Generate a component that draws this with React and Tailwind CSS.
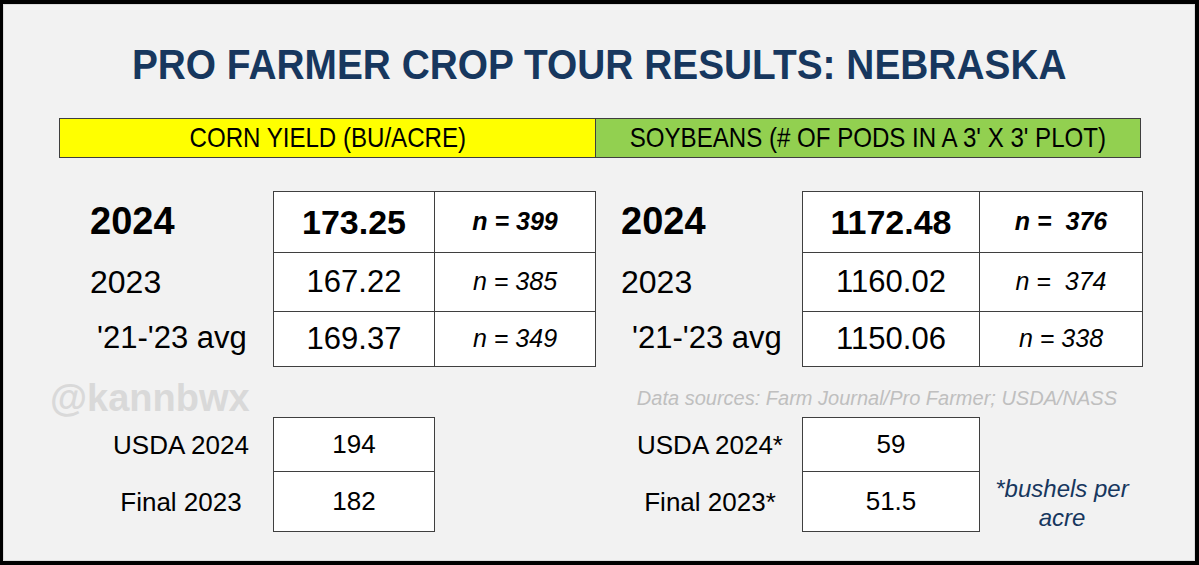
const navy = 'text-[#17375e]'

function Cell({ w, children, className = '' }) {
  return (
    <div
      className={`flex items-center justify-center border-r border-b border-[#3f3f3f] bg-white ${className}`}
      style={{ width: w }}
    >
      {children}
    </div>
  )
}

function TopTable({ widths, rows }) {
  return (
    <div className="flex flex-col border-l border-t border-[#3f3f3f]">
      {rows.map((r, i) => (
        <div key={i} className="flex" style={{ height: r.h }}>
          <Cell w={widths[0]} className={i === 0 ? 'text-[34px] font-bold' : 'text-[31px]'}>
            {r.value}
          </Cell>
          <Cell w={widths[1]} className={`whitespace-pre italic text-[25px] ${i === 0 ? 'font-bold' : ''}`}>
            {r.n}
          </Cell>
        </div>
      ))}
    </div>
  )
}

function TopLabels({ avgIndent }) {
  return (
    <div className="flex flex-col">
      <div className="flex h-[61px] items-center text-[38px] font-bold">2024</div>
      <div className="flex h-[59px] items-center text-[32px]">2023</div>
      <div className={`flex h-[55px] items-center text-[31px] ${avgIndent}`}>'21-'23 avg</div>
    </div>
  )
}

function BottomTable({ w, values }) {
  return (
    <div className="flex flex-col border-l border-t border-[#3f3f3f]">
      <div className="flex h-[54px]">
        <Cell w={w} className="text-[26px]">{values[0]}</Cell>
      </div>
      <div className="flex h-[60px]">
        <Cell w={w} className="text-[26px]">{values[1]}</Cell>
      </div>
    </div>
  )
}

function BottomLabels({ labels }) {
  return (
    <div className="flex w-[184px] flex-col text-center text-[26px]">
      <div className="flex h-[54px] items-center justify-center">{labels[0]}</div>
      <div className="flex h-[60px] items-center justify-center">{labels[1]}</div>
    </div>
  )
}

export default function App() {
  const corn = [
    { h: 61, value: '173.25', n: 'n = 399' },
    { h: 59, value: '167.22', n: 'n = 385' },
    { h: 55, value: '169.37', n: 'n = 349' },
  ]
  const soy = [
    { h: 61, value: '1172.48', n: 'n =  376' },
    { h: 59, value: '1160.02', n: 'n =  374' },
    { h: 55, value: '1150.06', n: 'n = 338' },
  ]

  return (
    <div className="h-[565px] w-[1199px] border-t-4 border-r-4 border-b-4 border-l-[3px] border-black bg-[#f2f2f2] font-['Liberation_Sans',Arial,sans-serif] text-black">
      <div className="flex h-full flex-col border border-[#dcdcdc]">
        <h1 className={`mt-[39px] flex justify-center text-[42px] leading-[42px] font-bold ${navy}`}>
          <span className="inline-block scale-x-[0.925] whitespace-nowrap">PRO FARMER CROP TOUR RESULTS: NEBRASKA</span>
        </h1>

        <div className="mt-[32px] ml-[55px] flex h-[40px] text-[28px] whitespace-nowrap">
          <div className="flex w-[537px] items-center justify-center border border-[#3f3f3f] bg-[#ffff00]">
            <span className="inline-block scale-x-[0.86]">CORN YIELD (BU/ACRE)</span>
          </div>
          <div className="flex w-[545px] items-center justify-center border border-l-0 border-[#3f3f3f] bg-[#92d050]">
            <span className="inline-block scale-x-[0.86]">SOYBEANS (# OF PODS IN A 3' X 3' PLOT)</span>
          </div>
        </div>

        <div className="mt-[33px] flex">
          <div className="ml-[86px] w-[183px]">
            <TopLabels avgIndent="pl-[7px]" />
          </div>
          <TopTable widths={[161, 161]} rows={corn} />
          <div className="ml-[25px] w-[181px]">
            <TopLabels avgIndent="pl-[11px]" />
          </div>
          <TopTable widths={[177, 163]} rows={soy} />
        </div>

        <div className="flex h-[50px] items-start">
          <div className="mt-[11px] ml-[46px] text-[38px] leading-[40px] font-bold text-[#d9d9d9]">@kannbwx</div>
          <div className="mt-[19px] mr-[77px] ml-auto text-[20px] leading-[24px] text-[#bfbfbf] italic">
            Data sources: Farm Journal/Pro Farmer; USDA/NASS
          </div>
        </div>

        <div className="flex items-end">
          <div className="ml-[85px]">
            <BottomLabels labels={['USDA 2024', 'Final 2023']} />
          </div>
          <BottomTable w={161} values={['194', '182']} />
          <div className="ml-[183px]">
            <BottomLabels labels={['USDA 2024*', 'Final 2023*']} />
          </div>
          <BottomTable w={177} values={['59', '51.5']} />
          <div className={`w-[164px] text-center text-[24px] leading-[29px] italic ${navy}`}>
            *bushels per
            <br />
            acre
          </div>
        </div>
      </div>
    </div>
  )
}
